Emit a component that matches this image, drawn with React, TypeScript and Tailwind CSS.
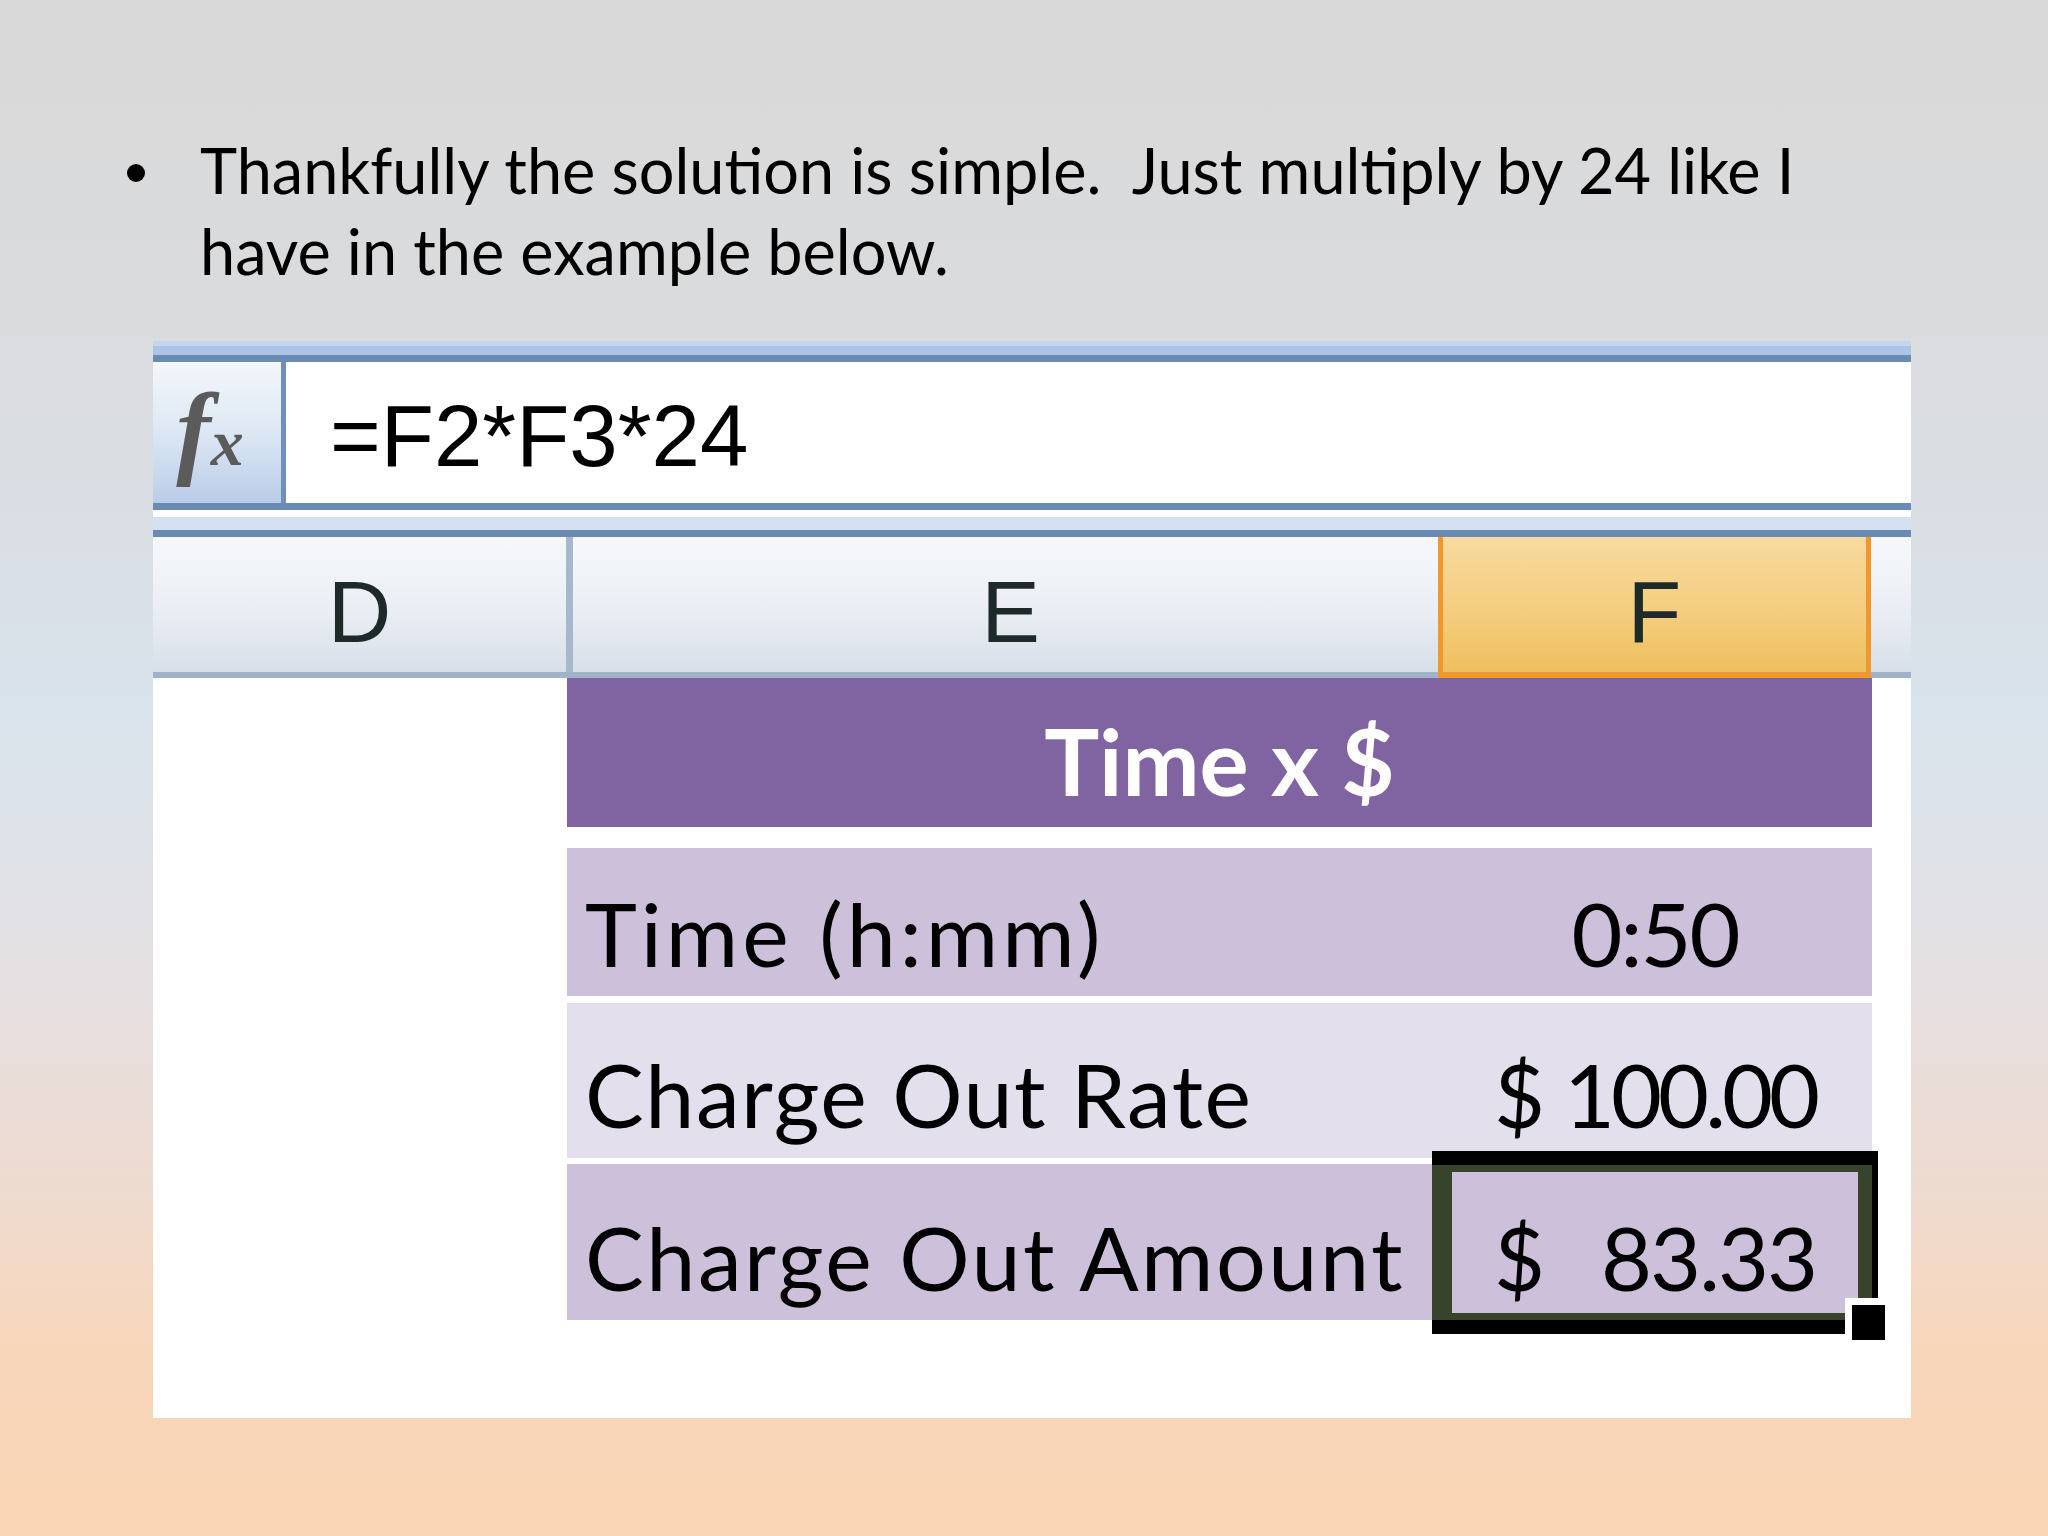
import React from "react";

// Slide: bullet text over a zoomed Excel screenshot (formula bar, column
// headers, a small purple table and the active-cell selection).

const body = { fontFamily: "Lato, 'Open Sans', sans-serif" };
const ui = { fontFamily: "'Liberation Sans', Arial, sans-serif" };

function DataRow({
  label,
  tone,
  children,
  top,
  height,
  gapTop,
  track,
}: {
  label: string;
  tone: string;
  children: React.ReactNode;
  top: string;
  height: string;
  gapTop: string;
  track: string;
}) {
  return (
    <div className={`flex ${tone} ${height} ${gapTop}`}>
      <div className={`w-[871px] pl-[18px] ${top} ${track} text-[88px] leading-[1.2] text-black`}>{label}</div>
      <div className={`flex-1 ${top} text-[88px] leading-[1.2] tracking-[-2px] text-black`}>{children}</div>
    </div>
  );
}

export default function App() {
  return (
    <div
      className="relative h-[1536px] w-[2048px] overflow-hidden bg-[linear-gradient(180deg,#d9d9d9_0%,#dadbdd_20%,#dadee4_33%,#d9e3ec_46%,#dfe2e8_56%,#e6dfe0_65%,#efdbcf_78%,#f8d6ba_88%,#f9d5b4_100%)]"
      style={body}
    >
      <div className="flex h-[292px] pl-[127px] pt-[129px]">
        <div className="w-[73px] pt-[35px]">
          <div className="h-[18px] w-[18px] rounded-full bg-black" />
        </div>
        <p className="text-[63px] leading-[81px] text-black">
          Thankfully the solution is simple.&nbsp; Just multiply by 24 like I
          <br />
          have in the example below.
        </p>
      </div>

      <div className="relative ml-[153px] mt-[49px] flex h-[1077px] w-[1758px] flex-col bg-white">
        {/* formula bar */}
        <div className="h-[5px] bg-[#c4d5ee]" />
        <div className="h-[9px] bg-[#aec4e6]" />
        <div className="h-[7px] bg-[#6a8bb3]" />
        <div className="flex h-[141px]">
          <div className="flex w-[128px] items-center justify-center bg-[linear-gradient(180deg,#f4f7fb_0%,#dde7f4_50%,#b9cde8_100%)]">
            <span
              className="pb-[6px] pr-[14px] text-[#5b5b5b]"
              style={{ fontFamily: "'Liberation Serif', 'Times New Roman', serif" }}
            >
              <span className="text-[104px] font-bold italic leading-none">f</span>
              <span className="text-[66px] font-bold italic leading-none">x</span>
            </span>
          </div>
          <div className="w-[5px] bg-[#7090ba]" />
          <div className="flex-1 bg-white pl-[44px] pt-[25px] text-[87px] leading-[1.12] text-black" style={ui}>
            =F2*F3*24
          </div>
        </div>
        <div className="h-[7px] bg-[#6a8bb3]" />
        <div className="h-[7px] bg-white" />
        <div className="h-[13px] bg-[#d3e1f2]" />
        <div className="h-[7px] bg-[#6a8bb3]" />

        {/* column headers */}
        <div className="flex h-[141px] text-[88px] leading-[1.12] text-[#1e2a2a]" style={ui}>
          <div className="flex w-[413px] justify-center border-b-[6px] border-[#9fb2c7] bg-[linear-gradient(180deg,#f6f8fb_0%,#eaeef4_55%,#d8dfe9_100%)] pt-[26px]">
            D
          </div>
          <div className="w-[7px] border-b-[6px] border-[#9fb2c7] bg-[#a8b8cc]" />
          <div className="flex w-[865px] justify-center border-b-[6px] border-[#9fb2c7] bg-[linear-gradient(180deg,#f6f8fb_0%,#eaeef4_55%,#d8dfe9_100%)] pl-[10px] pt-[26px]">
            E
          </div>
          <div className="flex w-[433px] justify-center border-[5px] border-t-0 border-b-[6px] border-[#f0982e] bg-[linear-gradient(180deg,#f8dba0_0%,#f4cd7e_55%,#efbf5e_100%)] pt-[26px]">
            F
          </div>
          <div className="flex-1 border-b-[6px] border-[#9fb2c7] bg-[linear-gradient(180deg,#f6f8fb_0%,#eaeef4_55%,#d8dfe9_100%)]" />
        </div>

        {/* table body */}
        <div className="pl-[414px] pr-[39px]">
          <div className="flex h-[149px] justify-center bg-[#8064a2] pt-[28px] text-[92px] font-bold leading-[1.2] text-white">
            Time x $
          </div>
          <DataRow label="Time (h:mm)" tone="bg-[#ccc0da]" height="h-[148px]" top="pt-[33px]" gapTop="mt-[21px]" track="tracking-[4px]">
            <div className="text-center">0:50</div>
          </DataRow>
          <DataRow label="Charge Out Rate" tone="bg-[#e4dfec]" height="h-[155px]" top="pt-[39px]" gapTop="mt-[7px]" track="tracking-[1.5px]">
            <div className="flex justify-between pl-[56px] pr-[56px]">
              <span>$</span>
              <span className="tracking-[-4px]">100.00</span>
            </div>
          </DataRow>
          <DataRow label="Charge Out Amount" tone="bg-[#ccc0da]" height="h-[156px]" top="pt-[41px]" gapTop="mt-[6px]" track="tracking-[2.5px]">
            <div className="flex justify-between pl-[56px] pr-[56px]">
              <span>$</span>
              <span>83.33</span>
            </div>
          </DataRow>
        </div>

        {/* active cell selection */}
        <div className="absolute left-[1279px] top-[810px] h-[183px] w-[446px] border-t-[14px] border-r-[6px] border-b-[14px] border-l-0 border-black">
          <div className="h-full w-full border-t-[7px] border-r-[14px] border-b-[7px] border-l-[20px] border-[#37432b]" />
        </div>
        <div className="absolute left-[1692px] top-[957px] h-[49px] w-[47px] border-[7px] border-white bg-black" />
      </div>
    </div>
  );
}
